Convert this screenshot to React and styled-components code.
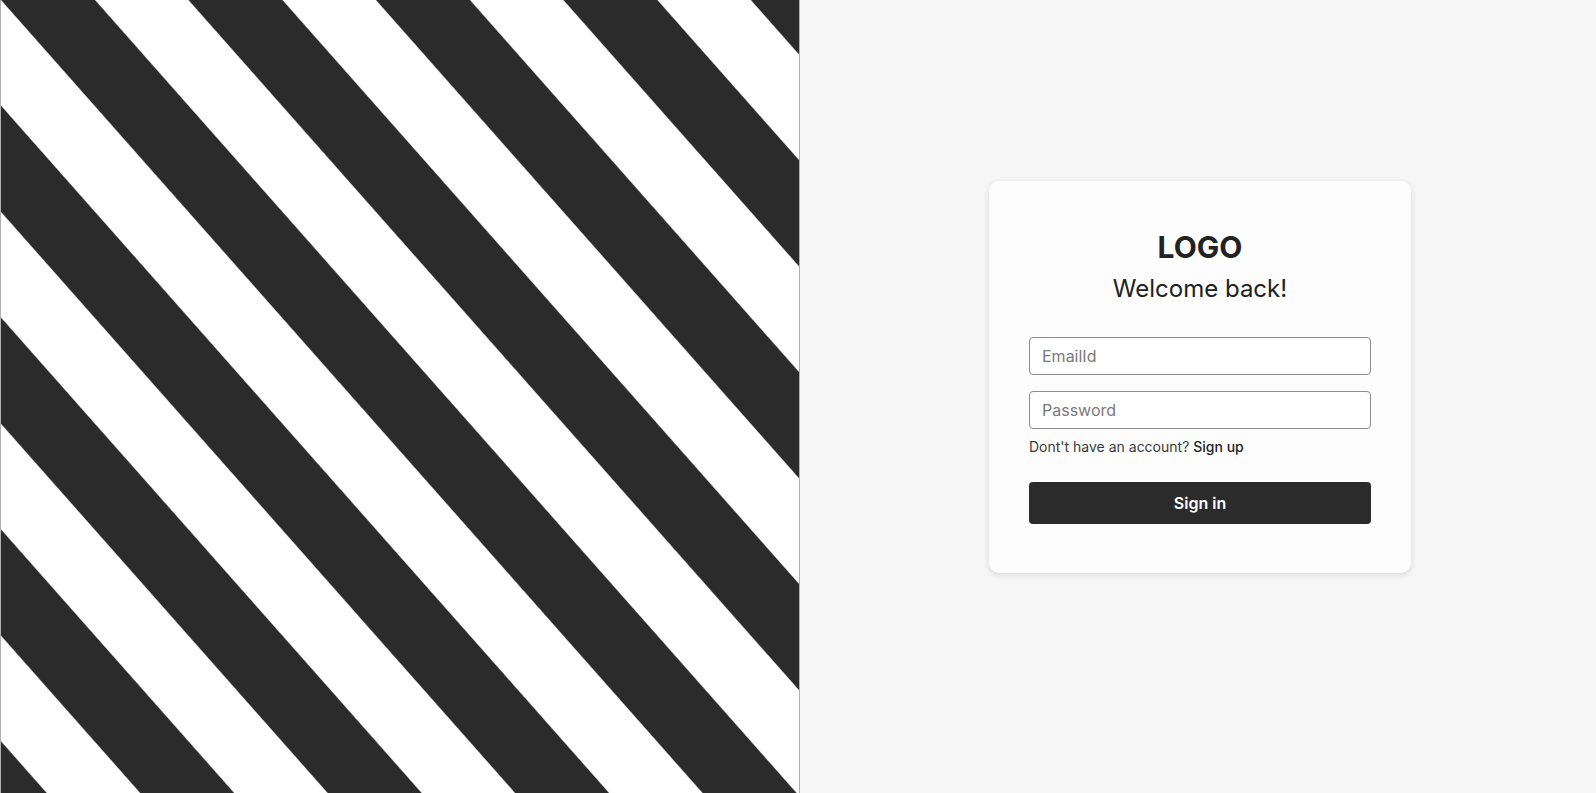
import React from "react";
import styled, { createGlobalStyle } from "styled-components";

const GlobalStyle = createGlobalStyle`
  * { box-sizing: border-box; }
  html, body { margin: 0; padding: 0; }
  body {
    font-family: Inter, "Noto Sans", sans-serif;
    color: #222;
    background: #f6f6f6;
  }
`;

const Page = styled.div`
  display: flex;
  height: 100vh;
  min-height: 793px;
`;

// diagonal stripes, 1px soft edges so they don't look jagged
const Stripes = styled.div`
  width: 800px;
  flex-shrink: 0;
  background: repeating-linear-gradient(
    48.5deg,
    #2b2b2b 0 34.4px,
    #ffffff 35.6px 104.4px,
    #2b2b2b 105.6px 140.4px
  );
  box-shadow: inset 1px 0 0 #b0b0b0, inset -1px 0 0 #b0b0b0;
`;

const Side = styled.div`
  flex: 1;
  display: flex;
  justify-content: center;
  align-items: center;
  padding: 0 0 40px 4px;
  background: #f6f6f6;
`;

const Card = styled.form`
  width: 422px;
  padding: 48px 40px 49px;
  background: #fdfdfd;
  border-radius: 10px;
  box-shadow: 0 2px 6px rgba(0, 0, 0, 0.12);
  display: flex;
  flex-direction: column;
`;

const Logo = styled.div`
  font-size: 30px;
  font-weight: 700;
  text-align: center;
  color: #222;
`;

const Welcome = styled.div`
  margin-top: 9px;
  font-size: 24px;
  font-weight: 400;
  text-align: center;
  color: #222;
`;

const Field = styled.input`
  height: 38px;
  width: 100%;
  padding: 0 12px;
  border: 1px solid #8c8c8c;
  border-radius: 4px;
  background: #fff;
  font-family: inherit;
  font-size: 16px;
  color: #222;
  margin-top: ${p => p.gap}px;
  &::placeholder { color: #7a7a7a; }
  &:focus { outline: none; }
`;

const Hint = styled.div`
  margin-top: 9px;
  font-size: 14px;
  color: #3a3a3a;
`;

const HintLink = styled.a`
  color: #1e1e1e;
  font-weight: 500;
  text-decoration: none;
  cursor: pointer;
`;

const SubmitBtn = styled.button`
  margin-top: 27px;
  height: 42px;
  width: 100%;
  border: none;
  border-radius: 4px;
  background: #2b2b2b;
  color: #fff;
  font-family: inherit;
  font-size: 16px;
  font-weight: 600;
  cursor: pointer;
`;

export default function App() {
  return (
    <>
      <GlobalStyle />
      <Page>
        <Stripes />
        <Side>
          <Card onSubmit={e => e.preventDefault()}>
            <Logo>LOGO</Logo>
            <Welcome>Welcome back!</Welcome>
            <Field gap={34} type="text" placeholder="EmailId" />
            <Field gap={16} type="password" placeholder="Password" />
            <Hint>
              Dont't have an account? <HintLink>Sign up</HintLink>
            </Hint>
            <SubmitBtn type="submit">Sign in</SubmitBtn>
          </Card>
        </Side>
      </Page>
    </>
  );
}
